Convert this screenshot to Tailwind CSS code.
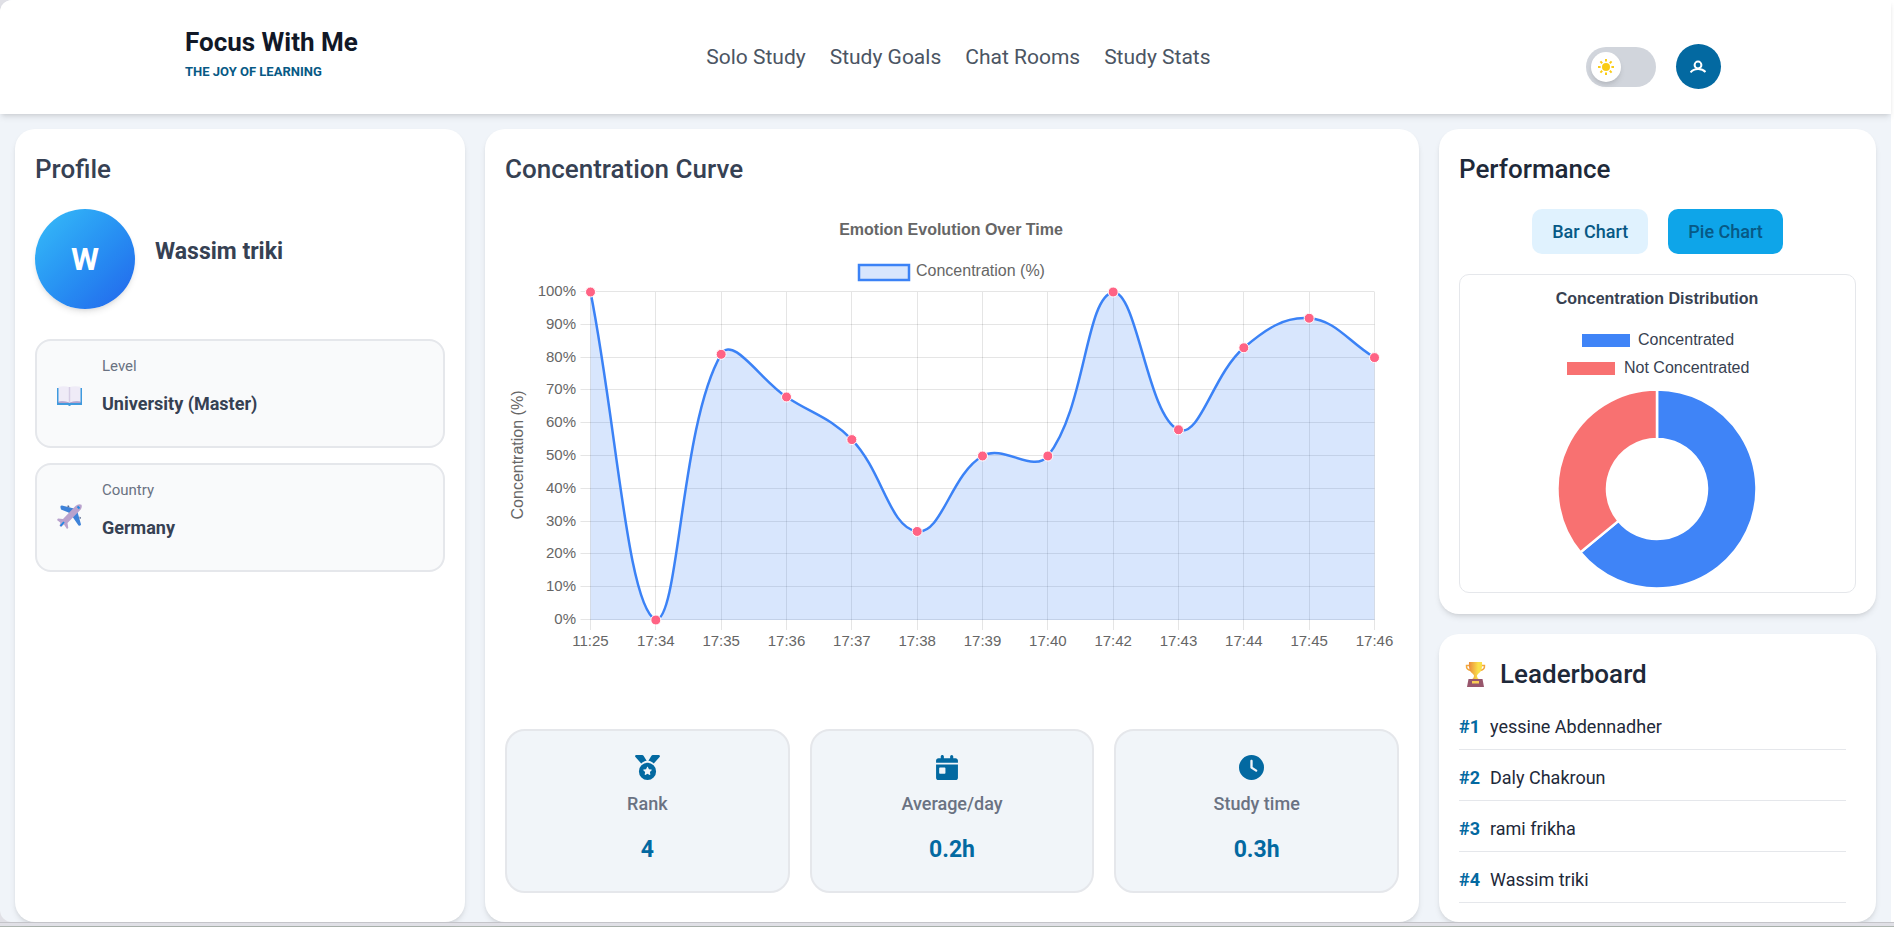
<!DOCTYPE html>
<html lang="en">
<head>
<meta charset="utf-8">
<title>Focus With Me</title>
<script src="https://cdn.jsdelivr.net/npm/@tailwindcss/browser@4"></script>
</head>
<body class="h-screen overflow-hidden bg-white font-['Roboto','Noto_Sans',sans-serif]">
<div class="flex h-full flex-col border-b border-[#adb5b0] bg-[#e0e0e6]">
  <div class="mr-[3px] flex min-h-0 flex-1 flex-col rounded-l-xl bg-[#f0f4f9] shadow-[3px_0_0_white]">
    <header class="grid h-[114px] shrink-0 grid-cols-[523fr_500fr_512fr] items-center rounded-tl-xl bg-white pr-[9%] pl-[185px] shadow-md">
      <a href="#" class="block">
        <span class="block text-[26px] leading-8 font-bold text-[#111827]">Focus With Me</span>
        <span class="mt-1.5 block pb-2 text-[13px] leading-4 font-bold text-[#075985]">THE JOY OF LEARNING</span>
      </a>
      <nav class="flex justify-center gap-6 text-[21px] leading-7 whitespace-nowrap text-[#4b5563]">
        <a href="#">Solo Study</a><a href="#">Study Goals</a><a href="#">Chat Rooms</a><a href="#">Study Stats</a>
      </nav>
      <div class="flex items-center justify-end gap-5 pt-[19px]">
        <label class="relative block h-10 w-[70px] rounded-full bg-gray-300 p-[5px]">
          <input type="checkbox" aria-label="Dark mode" class="absolute inset-0 opacity-0">
          <span class="flex size-[30px] items-center justify-center rounded-full bg-white shadow-md">
            <svg class="size-4" viewBox="0 0 16 16" fill="#facc15" stroke="#facc15" stroke-width="2"><circle cx="8" cy="8" r="4" stroke="none"/><path d="M8 0v2.600M8 13.400V16M0 8h2.600M13.400 8H16M2.400 2.400l1.800 1.800M11.800 11.800l1.800 1.800M2.400 13.600l1.800-1.800M11.800 4.200l1.800-1.800"/></svg>
          </span>
        </label>
        <button aria-label="Account" class="flex size-[45px] items-center justify-center rounded-full bg-[#0369a1]">
          <svg class="size-4" viewBox="0 0 16 16" fill="none" stroke="white" stroke-width="2"><circle cx="8" cy="6" r="3.400"/><path d="M.5 13.500C4 9 12 9 15.500 13"/></svg>
        </button>
      </div>
    </header>
    <main class="grid min-h-0 flex-1 grid-cols-[450fr_934fr_437fr] gap-5 px-[15px] pt-[15px]">
      <section class="rounded-[20px] bg-white px-5 pt-6 shadow-md">
        <h2 class="text-[26px] leading-8 font-medium text-gray-700">Profile</h2>
        <div class="mt-6 flex gap-5">
          <div class="flex size-[100px] items-center justify-center rounded-full bg-linear-to-br from-[#38bdf8] to-[#2563eb] text-[32px] font-bold text-white shadow-md">W</div>
          <h3 class="pt-[27px] text-[23px] leading-8 font-bold text-gray-700">Wassim triki</h3>
        </div>
        <div class="mt-[30px] flex flex-col gap-[15px]">
          <div class="flex h-[109px] gap-5 rounded-2xl border-2 border-gray-200 bg-gray-50 px-5">
            <svg class="mt-[45px] h-[21px] w-[25px]" viewBox="0 0 25 21"><path d="M0 2h25v17H14q-1.500 2-3 0H0z" fill="#3f9ade"/><path d="M1.500 .8Q7-.3 12.500 1Q18-.3 23.500 .8V16Q18 15 12.500 17Q7 15 1.500 16z" fill="#efebf7"/><path d="M1.500 15.500q5.500-1 11 1Q18 14.500 23.500 15.500v1.500H1.500z" fill="#b5a3cc"/><path d="M12.500 1V17" stroke="#d6cde4" stroke-width="1.500"/></svg>
            <div class="pt-[13px]"><p class="text-[15px] leading-6 text-gray-500">Level</p><p class="mt-3.5 text-lg leading-6 font-bold text-gray-700">University (Master)</p></div>
          </div>
          <div class="flex h-[109px] gap-5 rounded-2xl border-2 border-gray-200 bg-gray-50 px-5">
            <svg class="mt-[39px] size-[25px]" viewBox="0 0 25 25"><path d="M3.500 3.500Q3 1.500 5 1.500L17 4.500 20.500 8 24 20.500Q24 22 21.500 21.500L15 12 11.500 8.500 4 5.500z" fill="#3e82d8"/><path d="M10.500 1.500l1.500 0 .5 2-2-.5zM22.500 12.500l1.500 1-.5 1.500-1-.5z" fill="#5b6b8f"/><path d="M24.500 .8q1 3-1.500 5.500L10.500 19l.8 5-1.300 1-3-4.500L4 23l-1.500-1.300 1-3L0 16l1-1.500 5 .5L18.500 2Q21.500-.5 24.500 .8z" fill="#b9a2cd"/><path d="M20.500 2.500l2 2M3.500 22l3.500-4" stroke="#1e88e5" stroke-width="1.800"/></svg>
            <div class="pt-[13px]"><p class="text-[15px] leading-6 text-gray-500">Country</p><p class="mt-3.5 text-lg leading-6 font-bold text-gray-700">Germany</p></div>
          </div>
        </div>
      </section>

      <section class="flex flex-col rounded-[20px] bg-white px-5 pt-6 shadow-md">
        <h2 class="text-[26px] leading-8 font-medium text-gray-700">Concentration Curve</h2>
        <svg id="curve" class="mt-6 w-full" viewBox="505 209 894 450" font-family="Liberation Sans, Arial, sans-serif" font-size="15" fill="#666666" role="img" aria-label="Emotion evolution over time">
          <text x="951" y="235" text-anchor="middle" font-weight="bold" font-size="16">Emotion Evolution Over Time</text>
          <rect x="859" y="265" width="50" height="15" fill="#d8e6fd" stroke="#3b82f6" stroke-width="2.500"/>
          <text x="916" y="276" font-size="16">Concentration (%)</text>
          <text transform="translate(523 455) rotate(-90)" text-anchor="middle" font-size="16">Concentration (%)</text>
          <g id="grid" stroke="#000000" stroke-opacity=".1"></g><g id="labels"></g>
          <path id="area" fill="#3b82f6" fill-opacity=".2"/><path id="line" fill="none" stroke="#3b82f6" stroke-width="2.500"/>
          <g id="dots" fill="#ff6384" stroke="white"></g>
        </svg>
        <div class="mt-[70px] grid grid-cols-3 gap-5 text-center text-[#0369a1]">
          <div class="flex h-[164px] flex-col items-center rounded-[20px] border-2 border-gray-200 bg-slate-100 pt-6">
            <svg class="size-[25px]" viewBox="0 0 512 512" fill="currentColor"><path d="M4 38C-3 24 7 0 26 0h121c12 0 22 6 28 15l63 105c-42 7-81 26-111 55L4 38zM508 38L385 175c-30-29-69-48-111-55l63-105c6-9 16-15 28-15h121c19 0 29 24 22 38zM80 336a176 176 0 1 1 352 0a176 176 0 1 1-352 0zm184-90c-3-7-13-7-16 0l-22 45-50 7c-8 1-11 10-5 15l36 35-9 50c-1 8 7 13 13 10l45-24 45 24c6 3 14-2 13-10l-9-50 36-35c6-5 3-14-5-15l-50-7z"/></svg>
            <p class="mt-2.5 text-lg leading-7 font-medium text-gray-500">Rank</p><p class="mt-4 text-[23px] leading-8 font-bold">4</p>
          </div>
          <div class="flex h-[164px] flex-col items-center rounded-[20px] border-2 border-gray-200 bg-slate-100 pt-6">
            <svg class="mr-2.5 h-[25px] w-[22px]" viewBox="0 0 448 512" fill="currentColor"><path d="M128 0c18 0 32 14 32 32v32h128V32a32 32 0 0 1 64 0v32h48c27 0 48 21 48 48v48H0v-48c0-27 21-48 48-48h48V32c0-18 14-32 32-32zM0 192h448v272c0 27-21 48-48 48H48c-27 0-48-21-48-48V192zm80 64c-9 0-16 7-16 16v96c0 9 7 16 16 16h96c9 0 16-7 16-16v-96c0-9-7-16-16-16H80z"/></svg>
            <p class="mt-2.5 text-lg leading-7 font-medium text-gray-500">Average/day</p><p class="mt-4 text-[23px] leading-8 font-bold">0.2h</p>
          </div>
          <div class="flex h-[164px] flex-col items-center rounded-[20px] border-2 border-gray-200 bg-slate-100 pt-6">
            <svg class="mr-2.5 size-[25px]" viewBox="0 0 512 512" fill="currentColor"><path d="M256 0a256 256 0 1 1 0 512A256 256 0 1 1 256 0zM232 120V256c0 8 4 15.500 10.700 20l96 64c11 7.400 25.900 4.400 33.300-6.700s4.400-25.900-6.700-33.300L280 243.200V120c0-13.300-10.700-24-24-24s-24 10.700-24 24z"/></svg>
            <p class="mt-2.5 text-lg leading-7 font-medium text-gray-500">Study time</p><p class="mt-4 text-[23px] leading-8 font-bold">0.3h</p>
          </div>
        </div>
      </section>

      <div class="flex min-h-0 flex-col gap-5">
        <section class="rounded-[20px] bg-white px-5 pt-6 pb-[21px] shadow-md">
          <h2 class="text-[26px] leading-8 font-medium text-gray-800">Performance</h2>
          <div class="mt-6 flex justify-center gap-5 text-lg font-medium text-[#075985]">
            <button class="h-[45px] rounded-[10px] bg-[#e0f2fe] px-5">Bar Chart</button>
            <button class="h-[45px] rounded-[10px] bg-[#0ea5e9] px-5">Pie Chart</button>
          </div>
          <div class="mt-5 rounded-[10px] border border-gray-200">
            <svg class="w-full" viewBox="1460 275 395 317" font-family="Liberation Sans, Arial, sans-serif" font-size="16" fill="#374151" role="img" aria-label="Concentration distribution">
              <text x="1657" y="304" text-anchor="middle" font-weight="bold">Concentration Distribution</text>
              <rect x="1582" y="334" width="48" height="13" fill="#3f84f7"/><text x="1638" y="345">Concentrated</text>
              <rect x="1567" y="362" width="48" height="13" fill="#f87171"/><text x="1624" y="373">Not Concentrated</text>
              <g stroke="white" stroke-width="2.500"><path d="M1657 389.500a99.500 99.500 0 1 1-76.700 162.900L1618.500 520.900A50 50 0 1 0 1657 439z" fill="#3f84f7"/><path d="M1657 389.500A99.500 99.500 0 0 0 1580.300 552.400L1618.500 520.900A50 50 0 0 1 1657 439z" fill="#f87171"/></g>
            </svg>
          </div>
        </section>
        <section class="min-h-0 flex-1 rounded-[20px] bg-white px-5 pt-6 shadow-md">
          <h2 class="flex items-center gap-3.5 pl-1.5 text-[26px] leading-8 font-medium text-gray-800">
            <svg class="h-[25px] w-[21px]" viewBox="0 0 21 25"><defs><linearGradient id="gold"><stop stop-color="#eb8a3c"/><stop offset=".7" stop-color="#fae04b"/></linearGradient></defs><path d="M4 3.500H1.500Q1 8 6.500 8.500M17 3.500h2.500q.5 4.500-5 5" fill="none" stroke="#f3a83c" stroke-width="1.500"/><path d="M4 0h13q1 9-4 12l-1 1.500q0 3 3 4H6q3-1 3-4L8 12Q3 9 4 0z" fill="url(#gold)"/><path d="M3.500 17h14l1.500 8H2z" fill="#98566c"/><path d="M7 19h7v2.500H7z" fill="#f8cc55"/></svg>
            Leaderboard
          </h2>
          <ol class="mt-[9px] pr-2.5 text-lg text-gray-800">
            <li class="flex h-[51px] items-center gap-2.5 border-b border-gray-200 pt-1.5"><b class="text-[#0369a1]">#1</b>yessine Abdennadher</li>
            <li class="flex h-[51px] items-center gap-2.5 border-b border-gray-200 pt-1.5"><b class="text-[#0369a1]">#2</b>Daly Chakroun</li>
            <li class="flex h-[51px] items-center gap-2.5 border-b border-gray-200 pt-1.5"><b class="text-[#0369a1]">#3</b>rami frikha</li>
            <li class="flex h-[51px] items-center gap-2.5 border-b border-gray-200 pt-1.5"><b class="text-[#0369a1]">#4</b>Wassim triki</li>
          </ol>
        </section>
      </div>
    </main>
  </div>
  <div class="relative h-1 shrink-0 border-t border-[#c4c4c9] bg-[#e0e0e6]"></div>
</div>
<script>
const times = ['11:25','17:34','17:35','17:36','17:37','17:38','17:39','17:40','17:42','17:43','17:44','17:45','17:46'];
const values = [100,0,81,68,55,27,50,50,100,58,83,92,80];
const L = 590.5, R = 1374.5, T = 292, B = 620, step = (R - L) / 12;
const X = i => L + i * step, Y = v => B - (B - T) * v / 100;
const put = (id, html) => document.getElementById(id).innerHTML = html;
const px = n => Math.floor(n) + .5;
let grid = '', labels = '', dots = '';
for (let v = 0; v <= 100; v += 10) {
  grid += `<path d="M${L - 10} ${px(Y(v) - .5)}H${R}"/>`;
  labels += `<text x="576" y="${Math.round(Y(v)) + 4}" text-anchor="end">${v}%</text>`;
}
times.forEach((t, i) => {
  grid += `<path d="M${px(X(i))} ${T}V${B + 10}"/>`;
  labels += `<text x="${X(i)}" y="646" text-anchor="middle">${t}</text>`;
  dots += `<circle cx="${X(i)}" cy="${Y(values[i])}" r="5"/>`;
});
// Smooth curve: each point's control handles follow its neighbours, kept inside the plot.
const clamp = y => Math.max(T, Math.min(B, y));
const pts = values.map((v, i) => ({ x: X(i), y: Y(v) }));
const ctl = pts.map((p, i) => {
  const a = pts[i - 1] || p, b = pts[i + 1] || p;
  const d1 = Math.hypot(p.x - a.x, p.y - a.y), d2 = Math.hypot(b.x - p.x, b.y - p.y);
  const f1 = .4 * d1 / (d1 + d2), f2 = .4 * d2 / (d1 + d2);
  return { px: p.x - f1 * (b.x - a.x), py: clamp(p.y - f1 * (b.y - a.y)), nx: p.x + f2 * (b.x - a.x), ny: clamp(p.y + f2 * (b.y - a.y)) };
});
let d = `M${pts[0].x} ${pts[0].y}`;
for (let i = 1; i < pts.length; i++) d += `C${ctl[i-1].nx} ${ctl[i-1].ny} ${ctl[i].px} ${ctl[i].py} ${pts[i].x} ${pts[i].y}`;
put('grid', grid); put('labels', labels); put('dots', dots);
document.getElementById('line').setAttribute('d', d);
document.getElementById('area').setAttribute('d', `${d}V${B}H${L}Z`);
</script>
</body>
</html>
